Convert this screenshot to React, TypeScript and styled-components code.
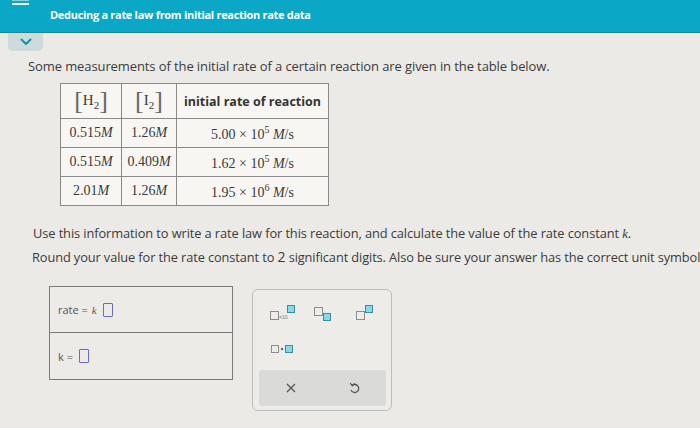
import React from "react";
import styled, { createGlobalStyle } from "styled-components";

const Global = createGlobalStyle`
  body {
    margin: 0;
    background: #ebeae6;
    font-family: "Open Sans", "DejaVu Sans", sans-serif;
    overflow: hidden;
  }
`;

const Page = styled.div`
  width: 700px;
  height: 428px;
  overflow: hidden;
  background: #ebeae6;
`;

const Header = styled.div`
  position: relative;
  height: 33px;
  background: #0aa7c6;
  border-bottom: 1px solid #0a8fa8;
  box-sizing: border-box;
  display: flex;
  align-items: center;
  padding-left: 50px;
`;

const Burger = styled.svg`
  position: absolute;
  left: 12px;
  top: 0;
`;

const Title = styled.div`
  color: #fff;
  font-weight: 700;
  font-size: 11px;
  letter-spacing: -0.3px;
  margin-top: -3px;
`;

const Tab = styled.div`
  margin-left: 8px;
  width: 35px;
  height: 18px;
  background: #cfdadc;
  border-radius: 0 0 5px 5px;
  display: flex;
  align-items: center;
  justify-content: center;
`;

const Content = styled.div`
  padding-left: 28px;
  white-space: nowrap;
`;

const Para = styled.p<{ $top: number; $indent?: number; $size?: number }>`
  margin: ${(p) => p.$top}px 0 0 ${(p) => p.$indent || 0}px;
  font-size: ${(p) => p.$size || 13}px;
  line-height: 16px;
  color: #3b3b3b;
  letter-spacing: -0.1px;
`;

const Table = styled.table`
  margin: 9px 0 0 32px;
  border-collapse: collapse;
  background: #f7f6f3;
  font-family: "Liberation Serif", serif;
  color: #3a3a3a;
`;

const Th = styled.th<{ $w: number }>`
  width: ${(p) => p.$w}px;
  height: 34px;
  border: 1px solid #8a8a8a;
  padding: 0;
  font-weight: normal;
  text-align: center;
`;

const HeadText = styled.span`
  font-family: "Open Sans", "DejaVu Sans", sans-serif;
  font-weight: 700;
  font-size: 12.5px;
  color: #333;
`;

const Bracket = styled.span`
  font-size: 26px;
  color: #666;
  font-weight: 300;
  vertical-align: middle;
`;

const Species = styled.span`
  font-size: 15px;
  vertical-align: middle;
  sub {
    font-size: 11px;
    vertical-align: -4px;
  }
`;

const Td = styled.td`
  height: 28px;
  border: 1px solid #8a8a8a;
  padding: 0 4px;
  font-size: 14px;
  text-align: center;
  i {
    font-style: italic;
  }
  sup {
    font-size: 10px;
    vertical-align: 6px;
  }
`;

const Answers = styled.div`
  display: flex;
  align-items: flex-start;
  gap: 19px;
  margin: 21px 0 0 21px;
`;

const Entry = styled.div`
  width: 182px;
  border: 1px solid #7a7a7a;
  background: #ecebe7;
`;

const EntryRow = styled.div<{ $h: number }>`
  height: ${(p) => p.$h}px;
  display: flex;
  align-items: center;
  padding-left: 8px;
  font-size: 11px;
  color: #555;
  gap: 4px;
  & + & {
    border-top: 1px solid #7a7a7a;
  }
`;

const Slot = styled.span`
  display: inline-block;
  width: 8px;
  height: 12px;
  border: 1.5px solid #6c6ad2;
  border-radius: 1px;
  margin-left: 2px;
`;

const Palette = styled.div`
  margin-top: 3px;
  width: 140px;
  height: 122px;
  border: 1px solid #bdbdbd;
  border-radius: 6px;
  background: #edece8;
  box-sizing: border-box;
  padding: 6px 5px 4px 6px;
  display: flex;
  flex-direction: column;
`;

const IconGrid = styled.div`
  display: grid;
  grid-template-columns: repeat(3, 1fr);
  row-gap: 14px;
  padding: 6px 0 0 2px;
  flex: 1;
  align-content: start;
`;

const Key = styled.div`
  height: 22px;
  display: flex;
  align-items: center;
  justify-content: center;
`;

const Tools = styled.div`
  height: 36px;
  background: #dadad8;
  border-radius: 3px;
  display: flex;
  align-items: center;
  justify-content: space-around;
`;

const Box = ({ x, y, s = 7, fill = false }: { x: number; y: number; s?: number; fill?: boolean }) => (
  <rect
    x={x}
    y={y}
    width={s}
    height={s}
    fill={fill ? "#8fd6e4" : "none"}
    stroke={fill ? "#2f93a8" : "#8c8c8c"}
    strokeWidth={1}
  />
);

export default function App() {
  return (
    <Page>
      <Global />
      <Header>
        <Burger width="18" height="8" viewBox="0 0 18 8">
          <rect x="0" y="3" width="17" height="2" fill="#fff" />
          <rect x="0" y="-1" width="17" height="1.5" fill="#fff" />
        </Burger>
        <Title>Deducing a rate law from initial reaction rate data</Title>
      </Header>
      <Tab>
        <svg width="12" height="8" viewBox="0 0 12 8">
          <path d="M1.5 1.5 L6 6 L10.5 1.5" fill="none" stroke="#1193ad" strokeWidth="2" strokeLinecap="round" strokeLinejoin="round" />
        </svg>
      </Tab>
      <Content>
        <Para $top={7}>
          Some measurements of the initial rate of a certain reaction are given in the table below.
        </Para>
        <Table>
          <thead>
            <tr>
              <Th $w={60}>
                <Bracket>[</Bracket>
                <Species>
                  H<sub>2</sub>
                </Species>
                <Bracket>]</Bracket>
              </Th>
              <Th $w={54}>
                <Bracket>[</Bracket>
                <Species>
                  I<sub>2</sub>
                </Species>
                <Bracket>]</Bracket>
              </Th>
              <Th $w={151}>
                <HeadText>initial rate of reaction</HeadText>
              </Th>
            </tr>
          </thead>
          <tbody>
            <tr>
              <Td>0.515<i>M</i></Td>
              <Td>1.26<i>M</i></Td>
              <Td>5.00 × 10<sup>5</sup> <i>M</i>/s</Td>
            </tr>
            <tr>
              <Td>0.515<i>M</i></Td>
              <Td>0.409<i>M</i></Td>
              <Td>1.62 × 10<sup>5</sup> <i>M</i>/s</Td>
            </tr>
            <tr>
              <Td>2.01<i>M</i></Td>
              <Td>1.26<i>M</i></Td>
              <Td>1.95 × 10<sup>6</sup> <i>M</i>/s</Td>
            </tr>
          </tbody>
        </Table>
        <Para $top={19} $indent={5} $size={12.85}>
          Use this information to write a rate law for this reaction, and calculate the value of the rate constant <i style={{ fontFamily: "Liberation Serif, serif" }}>k</i>.
        </Para>
        <Para $top={7} $indent={4} $size={12.8}>
          Round your value for the rate constant to <span style={{ fontSize: 14 }}>2</span> significant digits. Also be sure your answer has the correct unit symbol.
        </Para>
        <Answers>
          <Entry>
            <EntryRow $h={45}>
              rate = <i style={{ fontFamily: "Liberation Serif, serif", fontSize: 11 }}>k</i>
              <Slot />
            </EntryRow>
            <EntryRow $h={46}>
              k = <Slot />
            </EntryRow>
          </Entry>
          <Palette>
            <IconGrid>
              <Key>
                <svg width="26" height="18" viewBox="0 0 26 18">
                  <Box x={1.5} y={7.5} s={8} />
                  <text x="10" y="15" fontSize="5" fill="#777" fontFamily="Liberation Sans, sans-serif">×10</text>
                  <Box x={18.5} y={1.5} fill />
                </svg>
              </Key>
              <Key>
                <svg width="20" height="18" viewBox="0 0 20 18">
                  <Box x={1.5} y={3.5} s={8} />
                  <Box x={10.5} y={9.5} fill />
                </svg>
              </Key>
              <Key>
                <svg width="20" height="18" viewBox="0 0 20 18">
                  <Box x={1.5} y={7.5} s={8} />
                  <Box x={10.5} y={1.5} fill />
                </svg>
              </Key>
              <Key>
                <svg width="24" height="12" viewBox="0 0 24 12">
                  <Box x={1.5} y={2.5} />
                  <circle cx="12" cy="6" r="1.2" fill="#666" />
                  <Box x={15.5} y={2.5} fill />
                </svg>
              </Key>
            </IconGrid>
            <Tools>
              <svg width="10" height="10" viewBox="0 0 10 10">
                <path d="M1 1 L9 9 M9 1 L1 9" stroke="#555" strokeWidth="1.3" />
              </svg>
              <svg width="11" height="12" viewBox="0 0 11 12">
                <path d="M3 3.5 A4 4 0 1 1 2 8" fill="none" stroke="#555" strokeWidth="1.3" />
                <path d="M1.2 1.2 L3.4 3.8 L5.8 1.6" fill="none" stroke="#555" strokeWidth="1.3" />
              </svg>
            </Tools>
          </Palette>
        </Answers>
      </Content>
    </Page>
  );
}
